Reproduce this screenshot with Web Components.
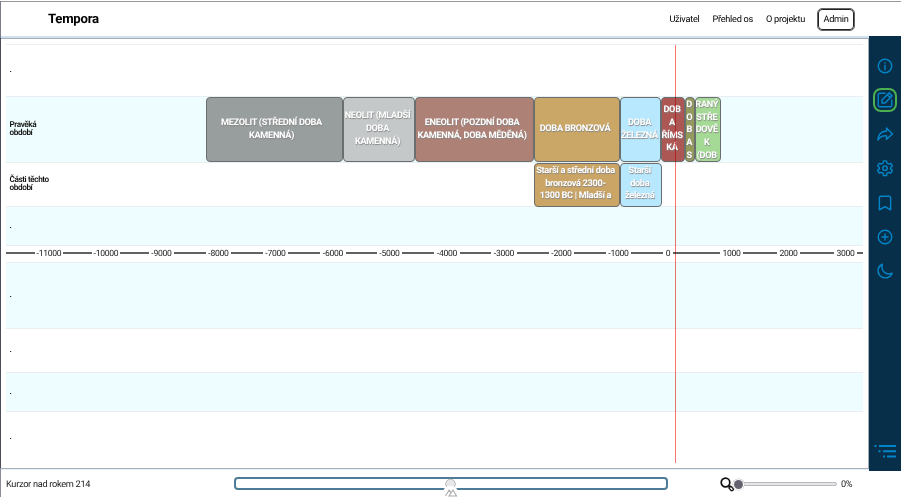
<!DOCTYPE html>
<html lang="cs"><head><meta charset="utf-8"><title>Tempora</title>
<style>html,body{margin:0;width:901px;height:497px;overflow:hidden;background:#fff}body{font-family:Roboto,"Liberation Sans",sans-serif;color:#111;text-rendering:geometricPrecision}</style></head>
<body><tempora-app></tempora-app>
<script>
function define(name, html, after) {
  const t = document.createElement('template');
  t.innerHTML = html;
  customElements.define(name, class extends HTMLElement {
    connectedCallback() {
      if (this.shadowRoot) return;
      this.attachShadow({mode: 'open'}).append(t.content.cloneNode(true));
      if (after) after(this, this.shadowRoot);
    }
  });
}

define('app-header', `<style>
:host{display:flex;box-sizing:border-box;border-top:1px solid #97989a;margin-top:1px;height:35px;align-items:center;padding:0 47px 0 48px;color:#000}
h1{margin:0 auto 0 0;font-size:13.2px;letter-spacing:-.25px;font-weight:700;line-height:16px;padding-top:2px}
nav{display:flex;align-items:center;gap:13px;font-size:9.2px;letter-spacing:-.28px}
nav span{padding-top:1px}
b{font-weight:400;box-sizing:border-box;border:1.6px solid #222;border-radius:4px;height:21px;width:36px;display:grid;place-items:center;padding-top:1px;outline:.5px solid #666;outline-offset:-.5px}
</style><h1>Tempora</h1><nav><span>Uživatel</span><span>Přehled os</span><span>O projektu</span><b>Admin</b></nav>`);

define('time-row', `<style>
:host{display:flex;box-sizing:border-box;border-top:1px solid #e9eef0;height:var(--h);align-items:flex-start;background:#fff}
:host([tint]){background:#eefdff}
.label{width:var(--lead,120px);box-sizing:border-box;padding:1px 0 0 3.500px;align-self:center;font-size:8.200px;line-height:7.600px;font-weight:600;letter-spacing:-.4px;flex:none}
.label span{display:block;width:46px}
</style><div class="label"><span></span></div><slot></slot>`, (h, r) => {
  r.querySelector('span').textContent = h.getAttribute('label');
  h.style.setProperty('--h', h.getAttribute('h') + 'px');
  if (h.hasAttribute('lead')) h.style.setProperty('--lead', h.getAttribute('lead') + 'px');
});

define('time-block', `<style>
:host{display:flex;box-sizing:border-box;flex:none;border:1px solid #6a6e6f;border-radius:4px;overflow:hidden;align-items:center;justify-content:center;color:#fff;font-size:9.200px;letter-spacing:-.32px;line-height:12.900px;font-weight:700;text-align:center;text-shadow:.5px .5px 1px #888}
:host([top]){align-items:flex-start}
:host([top]) div{margin-top:.6px}
div{flex:none;margin:0 -8px;position:relative;left:var(--dx,-1.5px)}
</style><div><slot></slot></div>`, h => {
  h.style.width = h.getAttribute('w') + 'px';
  h.style.height = h.getAttribute('h') + 'px';
  h.style.background = h.getAttribute('c');
  if (h.hasAttribute('dx')) h.style.setProperty('--dx', h.getAttribute('dx') + 'px');
});

define('time-axis', `<style>
:host{display:flex;height:17px;box-sizing:border-box;border-top:1px solid #e9eef0;align-items:center;font-size:8.600px;letter-spacing:-.28px;color:#222}
i{height:2px;background:#606264;flex:none;margin-bottom:2px}span{flex:none;text-align:center;white-space:nowrap}
</style>`, (h, r) => {
  const lines = [[6,35],[63,92],[120,149],[174,206],[231,263],[288,320],[346,377],[402,434],[460,491],[517,549],[574,606],[631,663],[673,720],[743,777],[800,834],[857,863]];
  lines.forEach(([a, b], n) => {
    const l = document.createElement('i'); l.style.width = b - a + 'px'; r.append(l);
    if (n < 15) { const s = document.createElement('span'); s.style.width = lines[n + 1][0] - b + 'px'; s.textContent = (n - 11) * 1000; r.append(s); }
  });
});

define('time-board', `<style>
:host{display:block;position:relative;box-sizing:border-box;width:869px;height:434px;border-top:2px solid #d0e2ed;border-bottom:1px solid #e2eff6}
.in{box-sizing:border-box;height:431px;border:solid #a2aeb8;border-width:1px 1px 1px 0;border-bottom-color:#aab0b6;padding:5px 5px 0 6px}
.cursor{position:absolute;left:675px;top:7px;width:1px;height:418px;background:#f77375;mix-blend-mode:multiply}
</style><div class="in">
<time-row label="." h="52"></time-row>
<time-row tint label="Pravěká období" h="66" lead="199.75">
<time-block w="137.5" h="65" c="#989d9d" dx="-3">MEZOLIT (STŘEDNÍ DOBA<br>KAMENNÁ)</time-block>
<time-block w="71.5" h="65" c="#c4c8c9">NEOLIT (MLADŠÍ<br>DOBA<br>KAMENNÁ)</time-block>
<time-block w="119.5" h="65" c="#ae8176" dx="-2.5">ENEOLIT (POZDNÍ DOBA<br>KAMENNÁ, DOBA MĚDĚNÁ)</time-block>
<time-block w="85.5" h="65" c="#caa766" dx="-2">DOBA BRONZOVÁ</time-block>
<time-block w="41.5" h="65" c="#b8e8fe" dx="-1">DOBA<br>ŽELEZNÁ</time-block>
<time-block w="23.5" h="65" c="#ad5754" dx="-1">DOB<br>A<br>ŘÍMS<br>KÁ</time-block>
<time-block w="10" h="65" c="#939a5c" top dx="-.6">D<br>O<br>B<br>A<br>S</time-block>
<time-block w="26" h="65" c="#a5d996" top dx="-1">RANÝ<br>STŘE<br>DOVĚ<br>K<br>(DOB</time-block>
</time-row>
<time-row label="Části těchto období" h="44" lead="528">
<time-block w="86" h="44" c="#caa566" top>Starší a střední doba<br>bronzová 2300-<br>1300 BC | Mladší a</time-block>
<time-block w="41.5" h="44" c="#b8e8fe" top dx="-1">Starší<br>doba<br>železná</time-block>
</time-row>
<time-row tint label="." h="39"></time-row>
<time-axis></time-axis>
<time-row tint label="." h="66"></time-row>
<time-row label="." h="44"></time-row>
<time-row tint label="." h="39"></time-row>
<time-row label="." h="52"></time-row>
</div><div class="cursor"></div>`);

define('side-bar', `<style>
:host{display:flex;flex-direction:column;box-sizing:border-box;width:32px;height:434.5px;background:#082f49;align-items:center;padding:17px 0 12px;color:#0284c7}
svg{width:18px;height:18px;fill:none;stroke:currentColor;stroke-width:1.9;stroke-linecap:round;stroke-linejoin:round;display:block}
.b{height:34.25px;width:32px;flex:none;display:flex;align-items:flex-start;justify-content:center}
.b svg{margin-top:3.500px}
.on{box-sizing:border-box;width:24px;height:24px;border:2px solid #4caf50;border-radius:8px;display:grid;place-items:center;margin-top:.5px}
.b .on svg{margin:0}
.list{width:22px;height:15px;margin-top:auto;stroke:none;fill:currentColor}
</style>
<div class="b"><svg viewBox="0 0 24 24"><circle cx="12" cy="12" r="9"/><path d="M12 11v6M12 7.5v.5"/></svg></div>
<div class="b"><div class="on"><svg viewBox="0 0 24 24"><path d="M12 3H5q-2 0-2 2v14q0 2 2 2h14q2 0 2-2v-7M8 16v-4l9.500-9.500 4 4L12 16zM15 5l4 4"/></svg></div></div>
<div class="b"><svg viewBox="0 0 24 24"><path d="M14 4l8 8-8 7v-4.500C8 14 5 16 2.500 20 3 12 7 8.500 14 8z"/></svg></div>
<div class="b"><svg viewBox="0 0 24 24"><path d="M10 2.500h4l.7 3 2.200 1.200 2.900-.9 2 3.500-2.200 2v1.900l2.200 2-2 3.500-2.900-.9-2.200 1.200-.7 3h-4l-.7-3-2.200-1.200-2.900.9-2-3.500 2.200-2v-1.900l-2.200-2 2-3.500 2.900.9 2.200-1.200z"/><circle cx="12" cy="12.200" r="3"/></svg></div>
<div class="b"><svg viewBox="0 0 24 24"><path d="M4.500 21V5q0-2 2-2h11q2 0 2 2v16L12 17z"/></svg></div>
<div class="b"><svg viewBox="0 0 24 24"><circle cx="12" cy="12" r="9"/><path d="M12 8v8M8 12h8"/></svg></div>
<div class="b"><svg viewBox="0 0 24 24"><path d="M8.500 3C2 6 1 13 5 18c5 5 14 4 16.500-3C14 18 6 13 8.500 3z"/></svg></div>
<svg class="list" viewBox="0 0 22 15"><path d="M.5 1h2v2h-2zM5 1h17v2H5zM4.500 6.300h2v2h-2zM9 6.300h13v2H9zM9 11.600h2v2H9zM13 11.600h9v2h-9z"/></svg>`);

define('app-footer', `<style>
:host{display:flex;box-sizing:border-box;height:27px;padding-left:6px;font-size:9.200px;letter-spacing:-.29px;color:#222}
.t{width:227.5px;padding-top:9px;line-height:11px;flex:none}
.bar{box-sizing:border-box;width:434.5px;height:13px;border:2px solid #4e7c98;border-radius:4px;margin-top:7px;flex:none;display:flex;justify-content:center;position:relative}
.bar svg{position:absolute;left:206.500px;top:-1px;width:17px;height:20px}
.zoom{display:flex;margin:7px 0 0 51.500px;height:14px;align-items:center}
.zoom span{padding-top:1px}
.mag{width:15px;height:15px;flex:none}
.rail{height:2px;width:100.5px;border:1px solid #b8b8bd;border-radius:3px;background:#e6e6e9;margin:0 4px 0 0;display:flex;align-items:center}
.rail i{width:9px;height:9px;margin-left:-1.500px;border-radius:50%;background:#666370;box-shadow:0 0 0 1px #fff,0 0 0 1.500px #bbb}
</style><div class="t">Kurzor nad rokem 214</div>
<div class="bar"><svg viewBox="0 0 17 20"><circle cx="8.500" cy="6" r="4.800" fill="#e8e8eb" stroke="#aaa" stroke-width=".8"/><circle cx="8.500" cy="16" r="8" fill="#fff"/><path d="M3.500 18L7.200 12 9 15M7 18l4-6 3.500 6z" fill="none" stroke="#aaa" stroke-width="1.100"/></svg></div>
<div class="zoom"><svg class="mag" viewBox="0 0 15 15" fill="none" stroke="#111" stroke-width="1.700"><circle cx="5.500" cy="5.500" r="4.300"/><path d="M8.500 8.500l2 2"/><rect x="9.800" y="9" width="2.800" height="5" rx="1.400" transform="rotate(-42 11.200 11.500)" stroke-width="1.300"/></svg><div class="rail"><i></i></div><span>0%</span></div>`);

define('tempora-app', `<style>
:host{display:block;width:901px;height:497px;position:relative;overflow:hidden;background:#fff}
.mid{display:flex;height:434px}
.edge{position:absolute;left:0;top:1px;bottom:0;width:1px;background:linear-gradient(#7b7c87 37px,#4a4c5b 37px 467px,#8a8d98 467px)}
</style><app-header></app-header><div class="mid"><time-board></time-board><side-bar></side-bar></div><app-footer></app-footer><div class="edge"></div>`);
</script></body></html>
